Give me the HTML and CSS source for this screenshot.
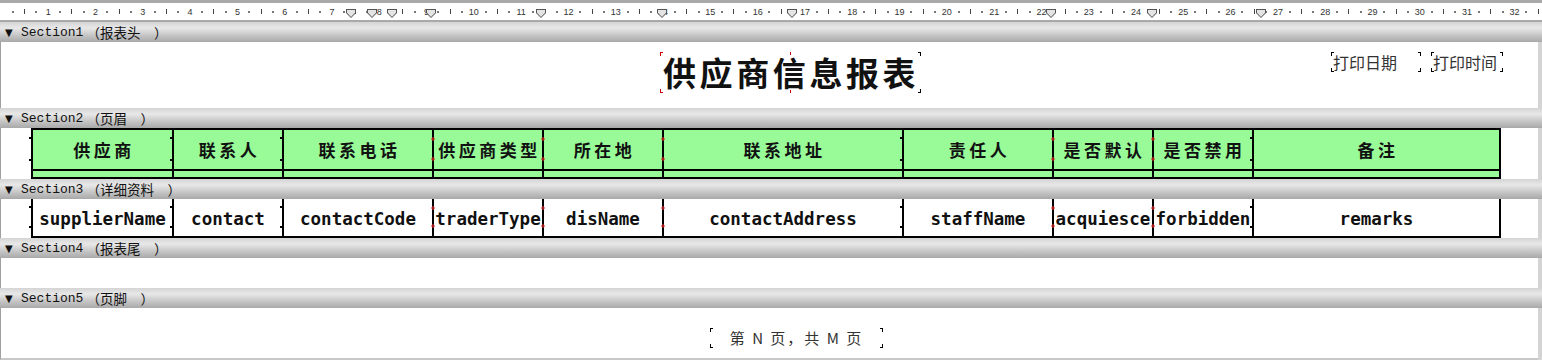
FILE: index.html
```html
<!DOCTYPE html>
<html lang="zh-CN">
<head>
  <meta charset="UTF-8">
  <title>供应商信息报表 - 设计</title>
  <link rel="stylesheet" href="styles.css">
</head>
<body>

  <div class="ruler">
    <div id="ticks" class="ticks"></div>
    <span class="marker" style="left:346px"></span>
    <span class="marker" style="left:367px"></span>
    <span class="marker" style="left:387px"></span>
    <span class="marker" style="left:426px"></span>
    <span class="marker" style="left:536px"></span>
    <span class="marker" style="left:657px"></span>
    <span class="marker" style="left:787px"></span>
    <span class="marker" style="left:1046px"></span>
    <span class="marker" style="left:1147px"></span>
    <span class="marker" style="left:1256px"></span>
  </div>

  <div class="bar"><span class="arrow">▼</span>Section1<span class="cap">（报表头　）</span></div>
  <div class="band band-head">
    <div class="box title">供应商信息报表</div>
    <div class="box print-date">打印日期</div>
    <div class="box print-time">打印时间</div>
  </div>

  <div class="bar"><span class="arrow">▼</span>Section2<span class="cap">（页眉　）</span></div>
  <div class="band">
    <div class="grid head">
      <div class="cell">供应商</div>
      <div class="cell">联系人</div>
      <div class="cell">联系电话</div>
      <div class="cell red">供应商类型</div>
      <div class="cell red">所在地</div>
      <div class="cell red">联系地址</div>
      <div class="cell">责任人</div>
      <div class="cell red">是否默认</div>
      <div class="cell red">是否禁用</div>
      <div class="cell">备注</div>
      <div class="strip"></div><div class="strip"></div><div class="strip"></div><div class="strip"></div><div class="strip"></div>
      <div class="strip"></div><div class="strip"></div><div class="strip"></div><div class="strip"></div><div class="strip"></div>
    </div>
  </div>

  <div class="bar"><span class="arrow">▼</span>Section3<span class="cap">（详细资料　）</span></div>
  <div class="band">
    <div class="grid detail">
      <div class="cell">supplierName</div>
      <div class="cell">contact</div>
      <div class="cell">contactCode</div>
      <div class="cell red">traderType</div>
      <div class="cell red">disName</div>
      <div class="cell red">contactAddress</div>
      <div class="cell">staffName</div>
      <div class="cell red">acquiesce</div>
      <div class="cell red">forbidden</div>
      <div class="cell">remarks</div>
    </div>
  </div>

  <div class="bar"><span class="arrow">▼</span>Section4<span class="cap">（报表尾　）</span></div>
  <div class="band band-tail"></div>

  <div class="bar"><span class="arrow">▼</span>Section5<span class="cap">（页脚　）</span></div>
  <div class="band band-foot">
    <div class="box page-no">第 N 页，共 M 页</div>
  </div>

  <script>
    const ticks = document.getElementById("ticks");
    for (let i = 0; i < 33; i++) {
      const cm = document.createElement("div");
      cm.className = "cm";
      cm.innerHTML = '<span>' + (i === 0 ? '' : i) + '</span>' +
        '<span><i class="dot"></i></span>' +
        '<span><i class="half"></i></span>' +
        '<span><i class="dot"></i></span>';
      ticks.appendChild(cm);
    }
  </script>

</body>
</html>
```

FILE: styles.css
```css
body {
  margin: 0;
  width: 1542px;
  height: 360px;
  overflow: hidden;
  background: #d4d4d4;
  font-family: "Liberation Sans", "Noto Sans CJK SC", sans-serif;
}

/* ruler */
.ruler {
  position: relative;
  height: 17px;
  background: #fff;
  border-top: 3px solid #a9a9a9;
  border-bottom: 2px solid #a9a9a9;
  overflow: hidden;
}

.ticks {
  display: flex;
  margin-left: -5px;
}

.cm {
  display: flex;
  flex: none;
  width: 47.3px;
}

.cm span {
  width: 11.825px;
  height: 17px;
  display: flex;
  align-items: center;
  justify-content: center;
  font-size: 9px;
  color: #333;
}

.dot {
  display: block;
  width: 2px;
  height: 2px;
  background: #777;
}

.half {
  display: block;
  width: 1px;
  height: 5px;
  background: #444;
}

.marker {
  position: absolute;
  top: 6px;
  width: 10px;
  height: 9px;
  background: #555;
  clip-path: polygon(0 0, 100% 0, 100% 45%, 50% 100%, 0 45%);
}

.marker::after {
  content: "";
  position: absolute;
  inset: 1px;
  background: #e4e4e4;
  clip-path: polygon(0 0, 100% 0, 100% 40%, 50% 100%, 0 40%);
}

/* section bars */
.bar {
  height: 20px;
  display: flex;
  align-items: center;
  padding-left: 5px;
  background: linear-gradient(#d4d4d4, #e8e8e8 30%, #c2c2c2 70%, #a9a9a9);
  font-family: "Liberation Mono", "Noto Sans CJK SC", monospace;
  font-size: 13px;
  color: #111;
  white-space: pre;
}

.arrow {
  font-family: "DejaVu Sans", sans-serif;
  font-size: 10px;
  width: 16px;
}

.cap {
  margin-left: 3px;
  font-family: "Noto Sans CJK SC", sans-serif;
  font-size: 13.5px;
}

/* bands */
.band {
  position: relative;
  background: #fff;
  border-left: 1px solid #a0a0a0;
  margin-right: 4px;
}

.band-head { height: 66px; }
.band-tail { height: 30px; }
.band-foot {
  height: 50px;
  border-bottom: 2px solid #c8c8c8;
}

/* text boxes on the design canvas */
.box {
  position: absolute;
  --mk: #000;
  background:
    linear-gradient(var(--mk), var(--mk)) left top / 1px 4px no-repeat,
    linear-gradient(var(--mk), var(--mk)) left top / 3px 1px no-repeat,
    linear-gradient(var(--mk), var(--mk)) left bottom / 1px 4px no-repeat,
    linear-gradient(var(--mk), var(--mk)) left bottom / 3px 1px no-repeat,
    linear-gradient(#000, #000) right top / 1px 4px no-repeat,
    linear-gradient(#000, #000) right top / 3px 1px no-repeat,
    linear-gradient(#000, #000) right bottom / 1px 4px no-repeat,
    linear-gradient(#000, #000) right bottom / 3px 1px no-repeat;
  white-space: nowrap;
}

.title {
  --mk: #c00;
  left: 659px;
  top: 10px;
  width: 261px;
  height: 41px;
  line-height: 41px;
  font-family: "Noto Sans CJK SC", sans-serif;
  font-size: 33px;
  font-weight: 700;
  letter-spacing: 3.6px;
  padding-left: 3px;
  box-sizing: border-box;
  color: #111;
}

.title::after {
  content: "";
  position: absolute;
  left: 129px;
  top: 0;
  width: 3px;
  height: 41px;
  background:
    linear-gradient(#c00, #c00) center top / 1px 3px no-repeat,
    linear-gradient(#c00, #c00) center bottom / 1px 3px no-repeat;
}

.print-date,
.print-time {
  top: 10px;
  height: 20px;
  line-height: 20px;
  font-family: "Noto Sans CJK SC", sans-serif;
  font-size: 16px;
  color: #333;
  padding-left: 2px;
  box-sizing: border-box;
}

.print-date { left: 1330px; width: 90px; }
.print-time { left: 1430px; width: 72px; }

.page-no {
  left: 709px;
  top: 20px;
  width: 173px;
  height: 20px;
  line-height: 20px;
  text-align: center;
  font-family: "Noto Sans CJK SC", sans-serif;
  font-size: 15px;
  letter-spacing: 2px;
  color: #333;
  white-space: pre;
}

/* report grid */
.grid {
  display: grid;
  grid-template-columns: 141px 110px 150px 110px 120px 240px 150px 100px 100px 249px;
  width: max-content;
  margin-left: 30px;
}

.cell {
  position: relative;
  display: flex;
  align-items: center;
  justify-content: center;
  border-left: 2px solid #000;
  white-space: nowrap;
}

.cell:nth-child(10) { border-right: 2px solid #000; }

.cell::before,
.cell::after {
  content: "";
  position: absolute;
  left: -4px;
  width: 4px;
  height: 2px;
  background: #000;
}

.cell::before { top: 7px; }
.cell::after { bottom: 8px; }

.cell.red::before,
.cell.red::after {
  left: -3px;
  width: 4px;
  height: 4px;
  background: #d42020;
  clip-path: polygon(35% 0, 65% 0, 65% 35%, 100% 35%, 100% 65%, 65% 65%, 65% 100%, 35% 100%, 35% 65%, 0 65%, 0 35%, 35% 35%);
}

.head .cell {
  height: 39px;
  background: #98fb98;
  border-top: 2px solid #000;
  border-bottom: 2px solid #000;
  font-family: "Noto Sans CJK SC", sans-serif;
  font-size: 17px;
  font-weight: 700;
  letter-spacing: 3.5px;
  padding-left: 3px;
  color: #111;
}

.strip {
  height: 6px;
  background: #98fb98;
  border-left: 2px solid #000;
  border-bottom: 2px solid #000;
}

.strip:nth-child(20) { border-right: 2px solid #000; }

.detail .cell {
  height: 39px;
  border-bottom: 2px solid #000;
  padding-top: 3px;
  box-sizing: border-box;
  font-family: "DejaVu Sans Mono", monospace;
  font-size: 17.5px;
  font-weight: 700;
  color: #111;
}
```
